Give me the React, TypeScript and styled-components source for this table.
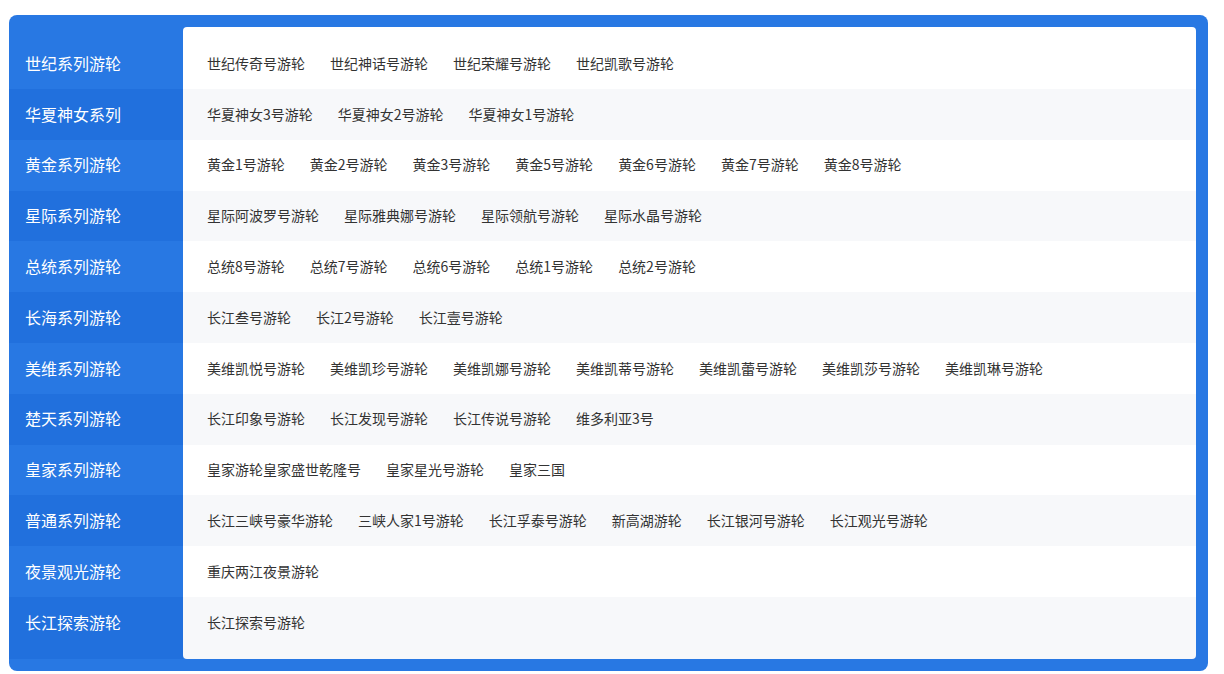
import React from "react";
import styled, { createGlobalStyle } from "styled-components";

const GlobalStyle = createGlobalStyle`
  html, body {
    margin: 0;
    padding: 0;
    background: #ffffff;
    font-family: "Noto Sans CJK SC", "Noto Sans", sans-serif;
  }
`;

const Frame = styled.div`
  margin: 15px 16px 0 9px;
  background: #2878e3;
  border-radius: 8px;
  padding: 12px 12px 12px 0;
`;

const Table = styled.div`
  display: flex;
  flex-direction: column;
`;

const Row = styled.div`
  display: grid;
  grid-template-columns: 174px 1fr;
  height: 50.8px;

  > * { padding-bottom: 1.5px; }

  &:first-child {
    height: 62px;
    > * { padding-top: 11.2px; }
    > *:last-child { border-radius: 4px 4px 0 0; }
  }
  &:last-child {
    height: 62px;
    > * { padding-bottom: 12.7px; }
    > *:last-child { border-radius: 0 0 4px 4px; }
  }
`;

const Label = styled.div<{ $alt: boolean }>`
  box-sizing: border-box;
  display: flex;
  align-items: center;
  padding-left: 16px;
  background: ${(p) => (p.$alt ? "#2170dd" : "transparent")};
  color: #ffffff;
  font-size: 16px;
  white-space: nowrap;
`;

const Items = styled.div<{ $alt: boolean }>`
  box-sizing: border-box;
  display: flex;
  align-items: center;
  gap: 25px;
  padding-left: 24px;
  background: ${(p) => (p.$alt ? "#f7f8fa" : "#ffffff")};
`;

const Item = styled.a`
  color: #333333;
  font-size: 14px;
  text-decoration: none;
  white-space: nowrap;
  cursor: pointer;
`;

const data: { label: string; items: string[] }[] = [
  { label: "世纪系列游轮", items: ["世纪传奇号游轮", "世纪神话号游轮", "世纪荣耀号游轮", "世纪凯歌号游轮"] },
  { label: "华夏神女系列", items: ["华夏神女3号游轮", "华夏神女2号游轮", "华夏神女1号游轮"] },
  { label: "黄金系列游轮", items: ["黄金1号游轮", "黄金2号游轮", "黄金3号游轮", "黄金5号游轮", "黄金6号游轮", "黄金7号游轮", "黄金8号游轮"] },
  { label: "星际系列游轮", items: ["星际阿波罗号游轮", "星际雅典娜号游轮", "星际领航号游轮", "星际水晶号游轮"] },
  { label: "总统系列游轮", items: ["总统8号游轮", "总统7号游轮", "总统6号游轮", "总统1号游轮", "总统2号游轮"] },
  { label: "长海系列游轮", items: ["长江叁号游轮", "长江2号游轮", "长江壹号游轮"] },
  { label: "美维系列游轮", items: ["美维凯悦号游轮", "美维凯珍号游轮", "美维凯娜号游轮", "美维凯蒂号游轮", "美维凯蕾号游轮", "美维凯莎号游轮", "美维凯琳号游轮"] },
  { label: "楚天系列游轮", items: ["长江印象号游轮", "长江发现号游轮", "长江传说号游轮", "维多利亚3号"] },
  { label: "皇家系列游轮", items: ["皇家游轮皇家盛世乾隆号", "皇家星光号游轮", "皇家三国"] },
  { label: "普通系列游轮", items: ["长江三峡号豪华游轮", "三峡人家1号游轮", "长江孚泰号游轮", "新高湖游轮", "长江银河号游轮", "长江观光号游轮"] },
  { label: "夜景观光游轮", items: ["重庆两江夜景游轮"] },
  { label: "长江探索游轮", items: ["长江探索号游轮"] },
];

export default function App() {
  return (
    <>
      <GlobalStyle />
      <Frame>
        <Table>
          {data.map((row, i) => (
            <Row key={row.label}>
              <Label $alt={i % 2 === 1}>{row.label}</Label>
              <Items $alt={i % 2 === 1}>
                {row.items.map((it) => (
                  <Item key={it}>{it}</Item>
                ))}
              </Items>
            </Row>
          ))}
        </Table>
      </Frame>
    </>
  );
}
